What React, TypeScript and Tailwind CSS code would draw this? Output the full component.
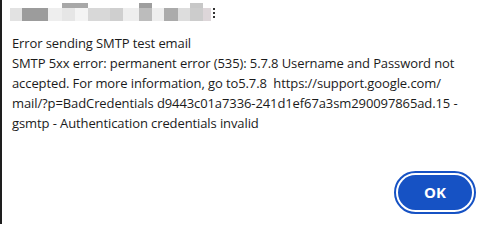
import React from "react";

const blocks: { w: number; top?: string; c: string }[] = [
  { w: 12, c: "#e2e2e2" },
  { w: 26, c: "#9c9c9c" },
  { w: 14, c: "#eeeeee" },
  { w: 13, c: "#e6e6e6", top: "#a8a8a8" },
  { w: 13, c: "#f4f4f4", top: "#a8a8a8" },
  { w: 22, c: "#d8d8d8" },
  { w: 13, c: "#cfcfcf" },
  { w: 16, c: "#eeeeee" },
  { w: 13, c: "#bcbcbc", top: "#9e9e9e" },
  { w: 12, c: "#eeeeee" },
  { w: 14, c: "#ababab" },
  { w: 12, c: "#dddddd" },
  { w: 13, c: "#cccccc", top: "#c8c8c8" },
  { w: 8, c: "#ddd6d9" },
];

export default function App() {
  return (
    <div
      className="w-[482px] h-[224px] bg-white border-l-2 border-[#1e1e1e] flex flex-col overflow-hidden"
      style={{ fontFamily: '"Open Sans", "Noto Sans", sans-serif' }}
    >
      <div className="flex items-end pl-[8px] pt-[3px] h-[21px]">
        {blocks.map((b, i) => (
          <div key={i} className="flex flex-col" style={{ width: b.w }}>
            <div className="h-[5px]" style={{ background: b.top ?? "transparent" }} />
            <div className="h-[13px]" style={{ background: b.c }} />
          </div>
        ))}
        <div className="ml-[2px] flex flex-col gap-[2px] self-center mt-[2px]">
          <div className="w-[2px] h-[2px] bg-[#333]" />
          <div className="w-[2px] h-[2px] bg-[#333]" />
          <div className="w-[2px] h-[2px] bg-[#333]" />
        </div>
      </div>
      <div className="pl-[10px] pr-[8px] pt-[12px] text-[13px] leading-[20px] text-[#1b1b1b] tracking-[-0.1px]">
        <div>Error sending SMTP test email</div>
        <div>
          SMTP 5xx error: permanent error (535): 5.7.8 Username and Password not
          <br />
          accepted. For more information, go to5.7.8&nbsp; https://support.google.com/
          <br />
          mail/?p=BadCredentials d9443c01a7336-241d1ef67a3sm290097865ad.15 -
          <br />
          gsmtp - Authentication credentials invalid
        </div>
      </div>
      <div className="flex justify-end pr-[6px] mt-[38px]">
        <button className="w-[82px] h-[43px] rounded-full border-2 border-[#1652c4] p-[2px] bg-white">
          <span className="flex w-full h-full items-center justify-center rounded-full bg-[#1652c4] text-white font-bold text-[15px]">
            OK
          </span>
        </button>
      </div>
    </div>
  );
}
